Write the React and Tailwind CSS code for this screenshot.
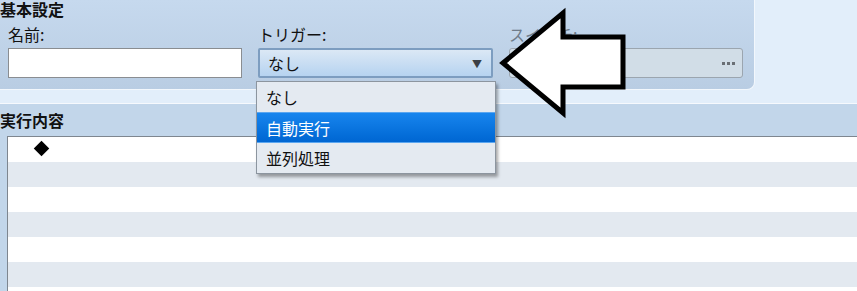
import React from 'react';

const font = { fontFamily: '"Noto Sans CJK JP", "Noto Sans", sans-serif' };

function Arrow() {
  return (
    <svg className="absolute left-0 top-0" width="857" height="291" viewBox="0 0 857 291">
      <polygon
        points="503,63 563,13 563,37 623,37 623,87 563,87 563,113"
        fill="#ffffff"
        stroke="#000000"
        strokeWidth="5"
        strokeLinejoin="miter"
      />
    </svg>
  );
}

function Dropdown() {
  const items = ['なし', '自動実行', '並列処理'];
  return (
    <div className="absolute left-[256px] top-[81px] w-[240px] border border-[#8c959f] bg-[#e4eaf1] shadow-[2px_3px_3px_rgba(0,0,0,0.35)]">
      {items.map((item, i) =>
        i === 1 ? (
          <div
            key={item}
            className="h-[31px] pl-[9px] flex items-center text-[16px] text-white bg-gradient-to-b from-[#1785ee] to-[#0066d2] border-y border-[#5aa6f0]"
          >
            {item}
          </div>
        ) : (
          <div key={item} className="h-[30px] pl-[9px] flex items-center text-[16px] text-[#111]">
            {item}
          </div>
        )
      )}
    </div>
  );
}

export default function App() {
  const rows = [0, 1, 2, 3, 4, 5, 6];
  return (
    <div className="relative w-[857px] h-[291px] overflow-hidden bg-[#e2eefa]" style={font}>
      {/* 基本設定 */}
      <div className="w-[755px] h-[90px] rounded-br-[8px] bg-gradient-to-b from-[#c6d9ee] to-[#b9cde3] border-r border-b border-[#f2f7fc] relative">
        <div className="absolute left-0 top-0 text-[16px] font-bold text-[#111] leading-[19px]">基本設定</div>
        <div className="flex gap-4 pl-2 pt-[25px]">
          <div className="w-[234px]">
            <div className="text-[16px] leading-[19px] text-[#111] mb-[4px]">名前:</div>
            <div className="h-[30px] bg-white border border-[#8a8d91]"></div>
          </div>
          <div className="w-[235px]">
            <div className="text-[16px] leading-[19px] text-[#111] mb-[4px]">トリガー:</div>
            <div className="h-[30px] rounded-[2px] border-2 border-[#7d9dc0] bg-gradient-to-b from-[#dbe8f5] to-[#b6d3f0] flex items-center justify-between pl-[8px] pr-[9px]">
              <span className="text-[16px] text-[#111]">なし</span>
              <span className="text-[10px] text-[#3a3f45]">▼</span>
            </div>
          </div>
          <div className="w-[234px]">
            <div className="text-[16px] leading-[19px] text-[#6f7c8a] mb-[4px]">スイッチ:</div>
            <div className="h-[30px] rounded-[3px] border border-[#9ba5af] bg-[#d1dde7] flex items-center justify-end gap-[2px] pr-[7px]">
              <span className="w-[3px] h-[3px] bg-[#6a6f75]"></span>
              <span className="w-[3px] h-[3px] bg-[#6a6f75]"></span>
              <span className="w-[3px] h-[3px] bg-[#6a6f75]"></span>
            </div>
          </div>
        </div>
      </div>

      <div className="h-[13px]"></div>
      <div className="h-px bg-[#f6f9fd]"></div>

      {/* 実行内容 */}
      <div className="bg-[#c2d6ea]">
        <div className="h-[32px] pt-[5px] text-[16px] font-bold text-[#111] leading-[22px]">実行内容</div>
        <div className="ml-[7px] border-t border-l border-[#7e868f]">
          {rows.map((r) => (
            <div key={r} className={`h-[25px] flex items-center ${r % 2 === 0 ? 'bg-white' : 'bg-[#e3e9f0]'}`}>
              {r === 0 && <span className="ml-[28px] mb-[2px] w-[11px] h-[11px] bg-black rotate-45"></span>}
            </div>
          ))}
        </div>
      </div>

      <Dropdown />
      <Arrow />
    </div>
  );
}
